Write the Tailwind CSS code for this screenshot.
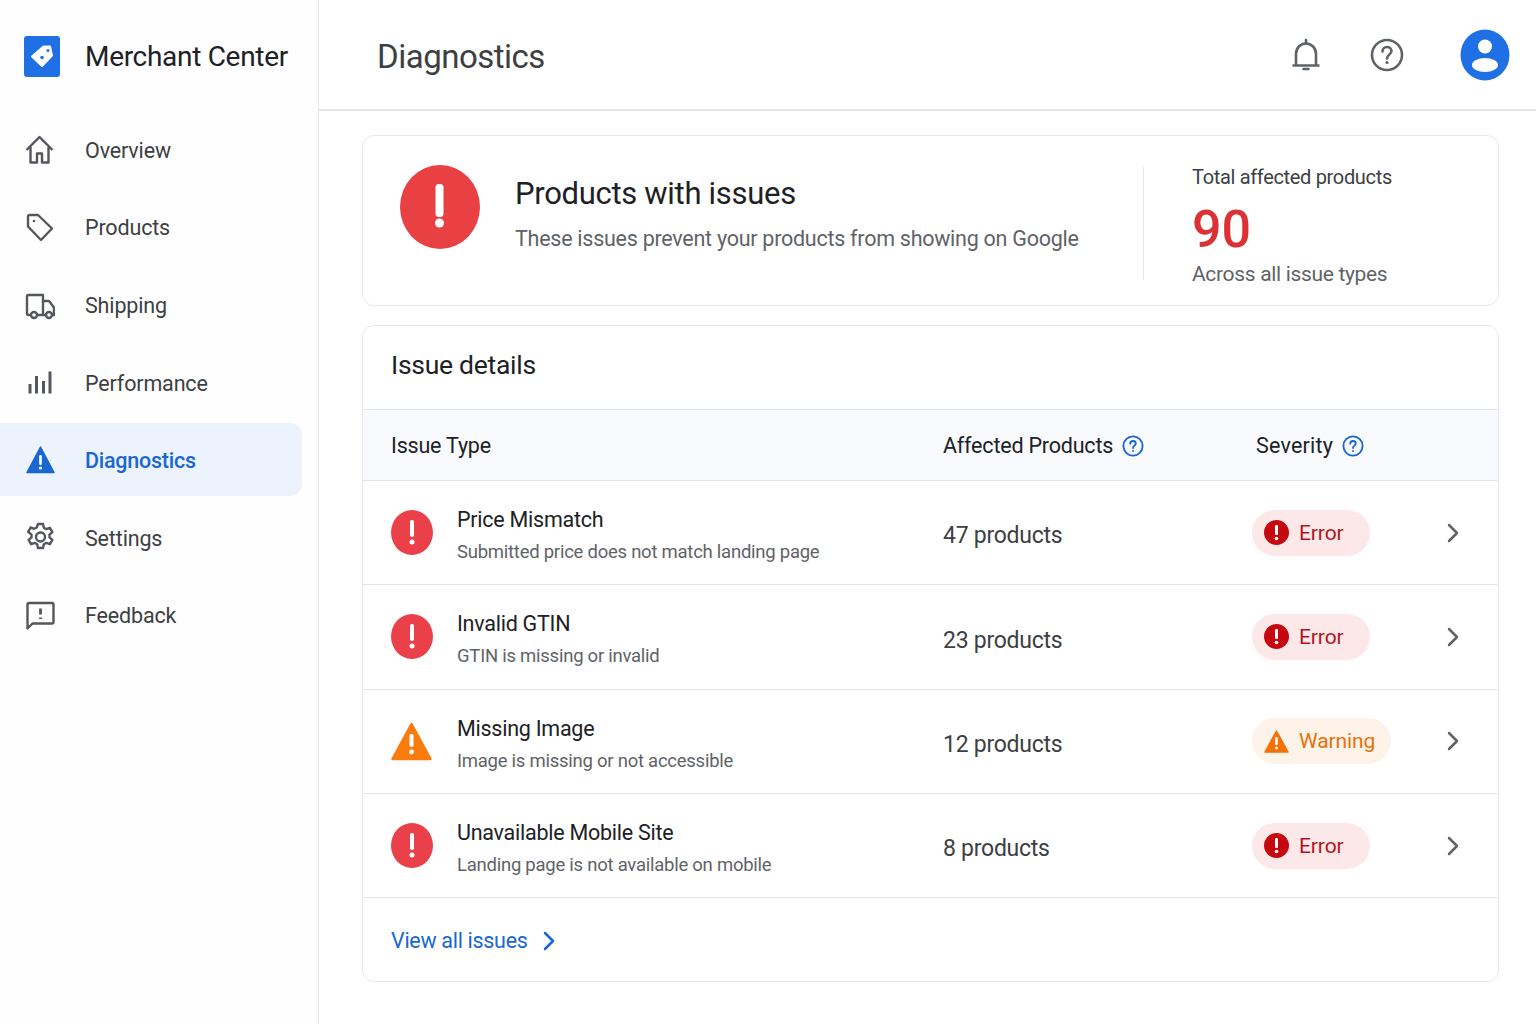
<!DOCTYPE html>
<html lang="en">
<head>
<meta charset="UTF-8">
<title>Diagnostics</title>
<script src="https://cdn.jsdelivr.net/npm/@tailwindcss/browser@4"></script>
</head>
<body class="bg-white font-['Roboto','Liberation_Sans',sans-serif] text-[#202124]">
<div class="flex h-[1024px] w-[1536px] overflow-hidden">
  <!-- sidebar -->
  <aside class="w-[319px] shrink-0 border-r border-[#e3e5e8] bg-[#fefefe]">
    <div class="flex h-[113px] items-start pl-6 pt-9">
      <svg class="w-9 h-[41px]" viewBox="0 0 36 41"><rect width="36" height="41" rx="3" fill="#1f6fe5"/><path d="M8 20.500 19.500 10.500 H26 L28 19.500 L18 30 Z" fill="#fff" stroke="#fff" stroke-width="2" stroke-linejoin="round"/><circle cx="18" cy="21.500" r="1.800" fill="#1f6fe5"/><circle cx="24" cy="14.500" r="1.500" fill="#1f6fe5"/></svg>
      <span class="ml-[25px] mt-[2px] text-[28px] leading-[38px] tracking-[-0.3px] text-[#202124]">Merchant Center</span>
    </div>
    <nav id="nav" class="flex flex-col gap-[4.6px] pr-4"></nav>
  </aside>

  <main class="flex-1 min-w-0">
    <header class="flex h-[111px] items-center border-b-2 border-[#e3e5e8] pl-[58px]">
      <h1 class="mt-1 text-[33px] leading-[44px] tracking-[-0.5px] text-[#3c4043]">Diagnostics</h1>
      <svg class="ml-auto w-9 h-9 translate-x-[1px] text-[#5f6368]" viewBox="0 0 36 36" fill="none" stroke="currentColor" stroke-width="2.600" stroke-linejoin="round"><path d="M4.500 28.500h27M8 28V17c0-6 4.500-10.500 10-10.500S28 11 28 17v11"/><path d="M18 3v3.500M15.500 32h5" stroke-linecap="round"/></svg>
      <svg class="ml-[46px] w-9 h-9 text-[#5f6368]" viewBox="0 0 36 36" fill="none" stroke="currentColor" stroke-width="2.600"><circle cx="18" cy="18" r="15"/><path d="M13.500 14.500c0-2.800 2-4.500 4.500-4.500s4.500 1.700 4.500 4c0 3.500-4.500 3.800-4.500 7.500" stroke-linecap="round"/><circle cx="18" cy="25.500" r="1.600" fill="currentColor" stroke="none"/></svg>
      <svg class="ml-[55px] mr-[26px] w-[50px] h-[52px]" viewBox="0 0 50 52"><ellipse cx="25" cy="26" rx="24.500" ry="25.500" fill="#1f6fe5"/><circle cx="25" cy="17.500" r="7" fill="#fff"/><ellipse cx="25" cy="36" rx="13" ry="7" fill="#fff"/></svg>
    </header>

    <div class="pl-[43px] pr-[37px] pt-6">
      <!-- summary -->
      <section class="flex h-[171px] rounded-xl border border-[#e6e8eb] bg-white">
        <svg class="ml-[37px] mt-[29px] w-[80px] h-[84px] shrink-0" viewBox="0 0 80 84"><ellipse cx="40" cy="42" rx="40" ry="42" fill="#e94043"/><rect x="35.500" y="19" width="8" height="33" rx="3.500" fill="#fff"/><circle cx="39.500" cy="58" r="4.500" fill="#fff"/></svg>
        <div class="ml-[35px] w-[628px] pt-[37px]">
          <h2 class="text-[31px] leading-[42px] tracking-[-0.3px] text-[#202124]">Products with issues</h2>
          <p class="mt-2 text-[21.500px] leading-[32px] tracking-[-0.26px] text-[#5f6368]">These issues prevent your products from showing on Google</p>
        </div>
        <div class="mt-[31px] h-[113px] w-px bg-[#e3e5e8]"></div>
        <div class="ml-[48px] pt-[26px]">
          <p class="text-[20px] leading-[30px] tracking-[-0.33px] text-[#3c4043]">Total affected products</p>
          <p class="mt-[10px] text-[52px] leading-[56px] font-medium text-[#dc3135]">90</p>
          <p class="mt-[1px] text-[21px] leading-[30px] tracking-[-0.33px] text-[#5f6368]">Across all issue types</p>
        </div>
      </section>

      <!-- table -->
      <section class="mt-[19px] h-[657px] rounded-xl border border-[#e6e8eb] bg-white">
        <h2 class="flex h-[83px] items-center pb-[6px] pl-7 text-[26.500px] tracking-[-0.28px] text-[#202124]">Issue details</h2>
        <div class="grid h-[72px] grid-cols-[552px_313px_1fr] items-center border-y border-[#e3e5e8] bg-[#f8fafd] pl-7 pt-[3px] text-[21.500px] tracking-[-0.2px] text-[#202124]">
          <span>Issue Type</span>
          <span class="flex items-center gap-[9px]">Affected Products <svg class="w-[22px] h-[22px] -translate-y-[1px]" viewBox="0 0 24 24" fill="none" stroke="#1a67d2" stroke-width="2"><circle cx="12" cy="12" r="10.500"/><path d="M9 9.500c0-1.800 1.300-3 3-3s3 1.200 3 2.700c0 2.300-3 2.500-3 5" stroke-linecap="round"/><circle cx="12" cy="17.500" r="1.100" fill="#1a67d2" stroke="none"/></svg></span>
          <span class="flex items-center gap-[9px] tracking-[0.2px]">Severity <svg class="w-[22px] h-[22px] -translate-y-[1px]" viewBox="0 0 24 24" fill="none" stroke="#1a67d2" stroke-width="2"><circle cx="12" cy="12" r="10.500"/><path d="M9 9.500c0-1.800 1.300-3 3-3s3 1.200 3 2.700c0 2.300-3 2.500-3 5" stroke-linecap="round"/><circle cx="12" cy="17.500" r="1.100" fill="#1a67d2" stroke="none"/></svg></span>
        </div>
        <div id="rows"></div>
        <a class="flex h-[82px] items-center gap-[15px] pt-1 pl-7 text-[21.500px] tracking-[-0.3px] text-[#1a67d2]">View all issues
          <svg class="w-3 h-5" viewBox="0 0 12 20" fill="none" stroke="#1a67d2" stroke-width="2.500" stroke-linecap="round" stroke-linejoin="round"><path d="M2 2l8 8-8 8"/></svg>
        </a>
      </section>
    </div>
  </main>
</div>

<script>
const navIcons = {
  Overview: '<path d="M1.500 15 14.500 2 27.500 15M5.500 12v15.500h6.500v-9h5v9h6.500V12"/>',
  Products: '<path d="M3 4.500A1.500 1.500 0 0 1 4.500 3H13l14 13.500-11 11.500L3 14.500z"/><circle cx="9" cy="9" r="1.300" fill="currentColor" stroke="none"/>',
  Shipping: '<path d="M6 25H3.500A1.500 1.500 0 0 1 2 23.500V6.500A1.500 1.500 0 0 1 3.500 5H18v20h-6M18 11h6l5 6.500V25h-2M18 25h3"/><circle cx="9" cy="25" r="3"/><circle cx="24" cy="25" r="3"/>',
  Performance: '<path d="M5 26.500V17M11.500 26.500V9M18.500 26.500V14M25 26.500V4.500" stroke-width="3"/>',
  Settings: '<circle cx="15.500" cy="15" r="4.500"/><path d="M13 2h5l.8 3.800 2.500 1.300 3.600-1.300 2.500 4.300-2.900 2.500v2.800l2.900 2.500-2.500 4.300-3.600-1.300-2.500 1.300-.8 3.800h-5l-.8-3.800-2.500-1.300-3.600 1.300-2.500-4.300 2.900-2.500v-2.800L3.100 9.800l2.500-4.300 3.600 1.300 2.500-1.300z"/>',
  Feedback: '<path d="M2.500 28.500V4.500A1.500 1.500 0 0 1 4 3h23A1.500 1.500 0 0 1 28.500 4.500V22a1.500 1.500 0 0 1-1.500 1.500H7.500z"/><path d="M15.500 8.500v6M15.500 17.500v1.500" stroke-width="2.800"/>'
};

const navItems = ["Overview", "Products", "Shipping", "Performance", "Diagnostics", "Settings", "Feedback"];

document.getElementById("nav").innerHTML = navItems.map((name) => {
  if (name === "Diagnostics") {
    return `<a class="flex h-[73px] items-center rounded-r-xl bg-[#edf3fd] pl-[25px] text-[#1a67d2]">
      <svg class="w-[30px] h-[30px]" viewBox="0 0 30 30"><path d="M15.500 2 29 27.500H2z" fill="#1a67d2" stroke="#1a67d2" stroke-width="1.500" stroke-linejoin="round"/><rect x="14.200" y="10" width="2.600" height="10" rx="1.200" fill="#fff"/><circle cx="15.500" cy="23" r="1.600" fill="#fff"/></svg>
      <span class="ml-[30px] pt-[2px] text-[21.500px] font-medium tracking-[-0.25px]">${name}</span></a>`;
  }
  return `<a class="flex h-[73px] items-center pl-[25px] text-[#3c4043]">
    <svg class="w-[30px] h-[30px] text-[#54575c]" viewBox="0 0 30 30" fill="none" stroke="currentColor" stroke-width="2.400" stroke-linejoin="round">${navIcons[name]}</svg>
    <span class="ml-[30px] pt-[3px] text-[21.500px] tracking-[-0.15px]">${name}</span></a>`;
}).join("");

const errorIcon = '<svg class="w-[42px] h-[45px]" viewBox="0 0 42 45"><ellipse cx="21" cy="22.500" rx="21" ry="22.500" fill="#e9404a"/><rect x="19" y="10" width="4" height="17" rx="1.800" fill="#fff"/><circle cx="21" cy="32" r="2.500" fill="#fff"/></svg>';
const warnIcon = '<svg class="w-[41px] h-[39px]" viewBox="0 0 41 39"><path d="M20.500 2 39.500 37H1.500z" fill="#fb7c0e" stroke="#fb7c0e" stroke-width="2.500" stroke-linejoin="round"/><rect x="18.500" y="12" width="4" height="13" rx="1.800" fill="#fff"/><circle cx="20.500" cy="30" r="2.400" fill="#fff"/></svg>';
const errorPill = '<span class="flex h-[46px] w-[118px] items-center gap-[10px] rounded-full bg-[#fce8e8] pl-3 text-[21px] tracking-[-0.1px] text-[#b3141d]"><svg class="w-[25px] h-[25px]" viewBox="0 0 25 25"><circle cx="12.500" cy="12.500" r="12.500" fill="#c5070f"/><rect x="11" y="5" width="3" height="10" rx="1.300" fill="#fff"/><circle cx="12.500" cy="18.500" r="1.800" fill="#fff"/></svg><span class="pt-[2px]">Error</span></span>';
const warnPill = '<span class="flex h-[46px] w-[139px] items-center gap-[10px] rounded-full bg-[#fef3e8] pl-3 text-[21px] tracking-[-0.1px] text-[#e8710a]"><svg class="w-[25px] h-[25px]" viewBox="0 0 25 25"><path d="M12.500 2 24 23H1z" fill="#f57209" stroke="#f57209" stroke-width="1.500" stroke-linejoin="round"/><rect x="11.200" y="8" width="2.600" height="8" rx="1.200" fill="#fff"/><circle cx="12.500" cy="19" r="1.500" fill="#fff"/></svg><span class="pt-[2px]">Warning</span></span>';

const issues = [
  { title: "Price Mismatch", desc: "Submitted price does not match landing page", count: "47 products", warn: false },
  { title: "Invalid GTIN", desc: "GTIN is missing or invalid", count: "23 products", warn: false },
  { title: "Missing Image", desc: "Image is missing or not accessible", count: "12 products", warn: true },
  { title: "Unavailable Mobile Site", desc: "Landing page is not available on mobile", count: "8 products", warn: false }
];

document.getElementById("rows").innerHTML = issues.map((it) => `
  <div class="grid h-[104.300px] grid-cols-[552px_309px_1fr_auto] items-center border-b border-[#e3e5e8] pl-7 pr-[38px]">
    <div class="flex items-center">
      <div class="flex w-[66px] shrink-0 items-center">${it.warn ? warnIcon : errorIcon}</div>
      <div class="pt-[6px]">
        <p class="text-[21.500px] leading-[32px] tracking-[-0.25px] text-[#202124]">${it.title}</p>
        <p class="mt-[1px] text-[18.500px] leading-[30px] tracking-[-0.25px] text-[#5f6368]">${it.desc}</p>
      </div>
    </div>
    <span class="pt-[8px] text-[23px] tracking-[-0.27px] text-[#3c4043]">${it.count}</span>
    ${it.warn ? warnPill : errorPill}
    <svg class="w-[14px] h-[22px]" viewBox="0 0 14 22" fill="none" stroke="#5f6368" stroke-width="2.500" stroke-linecap="round" stroke-linejoin="round"><path d="M3 3l8 8-8 8"/></svg>
  </div>`).join("");
</script>
</body>
</html>
